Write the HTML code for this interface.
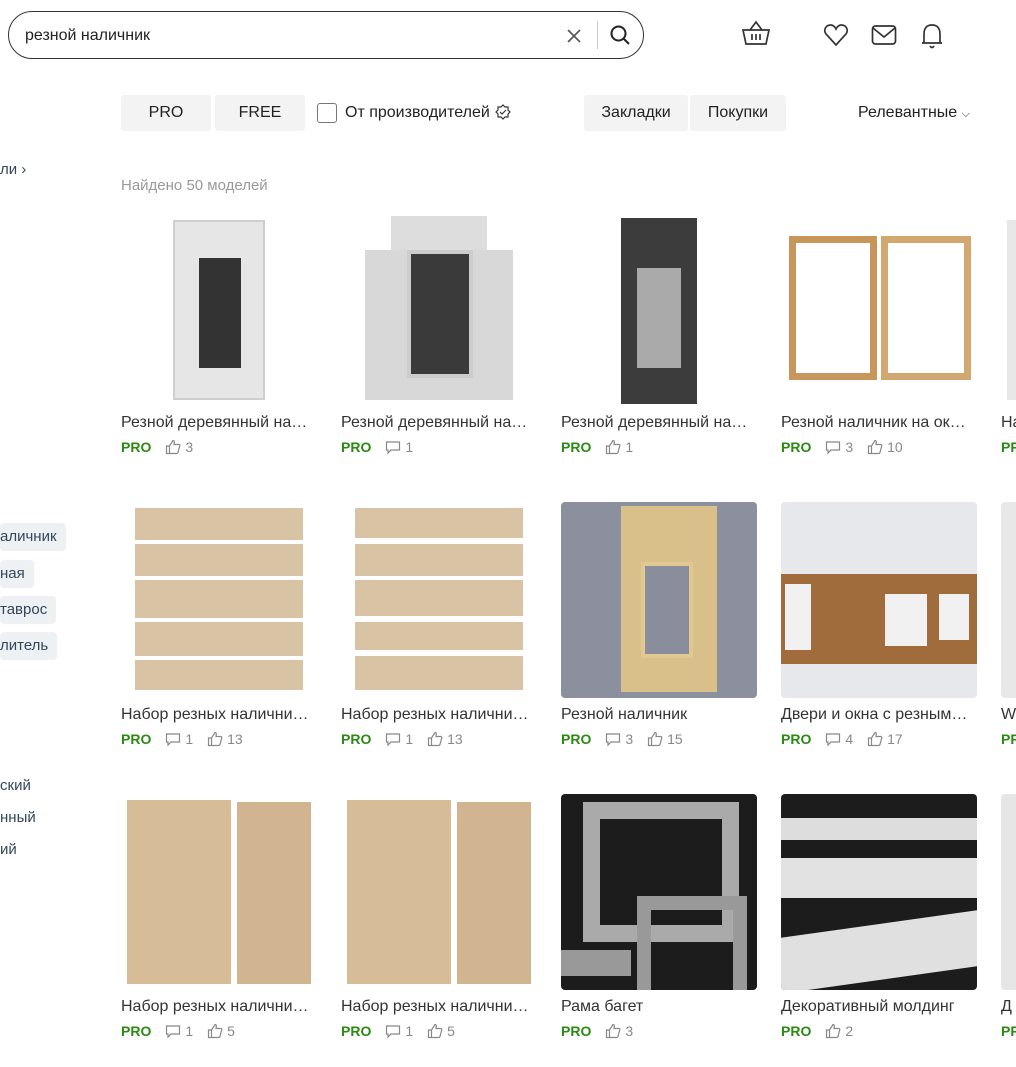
<!DOCTYPE html>
<html><head><meta charset="utf-8"><style>
*{margin:0;padding:0;box-sizing:border-box}
body{width:1016px;height:1067px;overflow:hidden;background:#fff;font-family:"Liberation Sans",sans-serif;color:#222;position:relative}
.a{position:absolute}
.search{left:8px;top:11px;width:636px;height:48px;border:1px solid #333;border-radius:24px}
.btn{background:#f3f3f3;border-radius:3px;font-size:16px;text-align:center;line-height:36px;color:#222}
.chip{background:#eef1f4;border-radius:4px;font-size:15px;color:#34465a;line-height:28px;padding:0 9px 0 0;left:0}
.side{font-size:15px;color:#34465a;left:0}
.img{width:196px;height:196px;border-radius:4px;overflow:hidden}
.t{font-size:16px;color:#333;white-space:nowrap;width:196px;overflow:hidden}
.m{font-size:14px;color:#888;display:flex;align-items:center;white-space:nowrap}
.m b{color:#2a8a12;font-weight:bold;margin-right:14px}
.m svg{margin-right:4px}
.m span{margin-right:14px}
.strip{position:absolute;background:#d9c3a5;left:14px;right:14px}
</style></head><body>
<div class="a search"></div>
<div class="a" style="left:25px;top:27px;font-size:16px">резной наличник</div>
<svg class="a" style="left:566px;top:28px" width="16" height="16"><path d="M2 2L14 14M14 2L2 14" stroke="#555" stroke-width="1.6"/></svg>
<div class="a" style="left:597px;top:21px;width:1px;height:28px;background:#ccc"></div>
<svg class="a" style="left:609px;top:24px" width="22" height="22"><circle cx="9.5" cy="9.5" r="7" fill="none" stroke="#222" stroke-width="2"/><path d="M14.5 14.5L20 20" stroke="#222" stroke-width="2"/></svg>
<svg class="a" style="left:741px;top:20px" width="30" height="26" fill="none" stroke="#333" stroke-width="1.7"><path d="M2 10H28L25 24H5Z M9 10L15 2L21 10 M11 14v6 M15 14v6 M19 14v6"/></svg>
<svg class="a" style="left:823px;top:23px" width="26" height="24" fill="none" stroke="#333" stroke-width="1.7"><path d="M13 22L3 11C0 7 3 2 7.5 2C10 2 12 4 13 6C14 4 16 2 18.5 2C23 2 26 7 23 11Z"/></svg>
<svg class="a" style="left:871px;top:24px" width="26" height="22" fill="none" stroke="#333" stroke-width="1.7"><rect x="1.5" y="2" width="23" height="18" rx="3"/><path d="M2 4L13 13L24 4"/></svg>
<svg class="a" style="left:920px;top:22px" width="24" height="28" fill="none" stroke="#333" stroke-width="1.7"><path d="M4 21V12C4 6 7 3 12 3C17 3 20 6 20 12V21H2H22 M10 24Q12 27 14 24"/></svg>

<div class="a btn" style="left:121px;top:95px;width:90px">PRO</div>
<div class="a btn" style="left:215px;top:95px;width:90px">FREE</div>
<div class="a" style="left:317px;top:103px;width:20px;height:20px;border:1px solid #777;border-radius:3px"></div>
<div class="a" style="left:345px;top:104px;font-size:16px">От производителей</div>
<svg class="a" style="left:495px;top:104px" width="16" height="16" fill="none" stroke="#333" stroke-width="1.2"><path d="M8 1L10 3L13 3L13 6L15 8L13 10L13 13L10 13L8 15L6 13L3 13L3 10L1 8L3 6L3 3L6 3Z M5 8L7 10L11 6"/></svg>
<div class="a btn" style="left:584px;top:95px;width:104px">Закладки</div>
<div class="a btn" style="left:690px;top:95px;width:96px">Покупки</div>
<div class="a" style="left:858px;top:104px;font-size:16px">Релевантные <span style="font-size:11px">⌵</span></div>

<div class="a side" style="top:161px">ли ›</div>
<div class="a" style="left:121px;top:177px;font-size:15px;color:#999">Найдено 50 моделей</div>

<div class="a chip" style="top:523px">аличник</div>
<div class="a chip" style="top:560px">ная</div>
<div class="a chip" style="top:596px">таврос</div>
<div class="a chip" style="top:632px">литель</div>
<div class="a side" style="top:777px">ский</div>
<div class="a side" style="top:809px">нный</div>
<div class="a side" style="top:841px">ий</div>

<!-- Row 1 -->
<div class="a img" style="left:121px;top:210px"><div class="a" style="left:52px;top:10px;width:92px;height:180px;background:#e6e6e6;border:2px solid #cfcfcf"></div><div class="a" style="left:78px;top:48px;width:42px;height:110px;background:#333"></div></div>
<div class="a img" style="left:341px;top:210px"><div class="a" style="left:24px;top:40px;width:148px;height:150px;background:#d8d8d8"></div><div class="a" style="left:66px;top:40px;width:66px;height:128px;background:#3a3a3a;border:4px solid #ccc"></div><div class="a" style="left:50px;top:6px;width:96px;height:34px;background:#ddd"></div></div>
<div class="a img" style="left:561px;top:210px"><div class="a" style="left:60px;top:8px;width:76px;height:186px;background:#3c3c3c"></div><div class="a" style="left:76px;top:58px;width:44px;height:100px;background:#aaa"></div></div>
<div class="a img" style="left:781px;top:210px"><div class="a" style="left:8px;top:26px;width:88px;height:144px;border:7px solid #c8955a"></div><div class="a" style="left:100px;top:26px;width:90px;height:144px;border:7px solid #d3a870"></div></div>
<div class="a img" style="left:1001px;top:210px"><div class="a" style="left:6px;top:10px;width:20px;height:180px;background:#e8e8e8"></div></div>
<div class="a t" style="left:121px;top:414px">Резной деревянный на…</div>
<div class="a t" style="left:341px;top:414px">Резной деревянный на…</div>
<div class="a t" style="left:561px;top:414px">Резной деревянный на…</div>
<div class="a t" style="left:781px;top:414px">Резной наличник на ок…</div>
<div class="a t" style="left:1001px;top:414px;width:15px">На</div>

<!-- Row 2 -->
<div class="a img" style="left:121px;top:502px"><div class="strip" style="top:6px;height:32px"></div><div class="strip" style="top:42px;height:32px"></div><div class="strip" style="top:78px;height:38px"></div><div class="strip" style="top:120px;height:34px"></div><div class="strip" style="top:158px;height:30px"></div></div>
<div class="a img" style="left:341px;top:502px"><div class="strip" style="top:6px;height:30px"></div><div class="strip" style="top:42px;height:32px"></div><div class="strip" style="top:78px;height:36px"></div><div class="strip" style="top:120px;height:28px"></div><div class="strip" style="top:154px;height:34px"></div></div>
<div class="a img" style="left:561px;top:502px;background:#8c909e"><div class="a" style="left:60px;top:4px;width:96px;height:186px;background:#d9bf8a"></div><div class="a" style="left:80px;top:60px;width:52px;height:96px;background:#8a8e9c;border:4px solid #e0c890"></div></div>
<div class="a img" style="left:781px;top:502px;background:#e6e8eb"><div class="a" style="left:0;top:72px;width:196px;height:90px;background:#a06c3c"></div><div class="a" style="left:4px;top:82px;width:26px;height:66px;background:#f1f1f1"></div><div class="a" style="left:104px;top:92px;width:42px;height:52px;background:#f1f1f1"></div><div class="a" style="left:158px;top:92px;width:30px;height:46px;background:#f1f1f1"></div></div>
<div class="a img" style="left:1001px;top:502px;background:#e8e8e8"></div>
<div class="a t" style="left:121px;top:706px">Набор резных налични…</div>
<div class="a t" style="left:341px;top:706px">Набор резных налични…</div>
<div class="a t" style="left:561px;top:706px">Резной наличник</div>
<div class="a t" style="left:781px;top:706px">Двери и окна с резным…</div>
<div class="a t" style="left:1001px;top:706px;width:15px">W</div>

<!-- Row 3 -->
<div class="a img" style="left:121px;top:794px"><div class="a" style="left:6px;top:6px;width:104px;height:184px;background:#d6bd98"></div><div class="a" style="left:116px;top:8px;width:74px;height:182px;background:#d0b590"></div></div>
<div class="a img" style="left:341px;top:794px"><div class="a" style="left:6px;top:6px;width:104px;height:184px;background:#d6bd98"></div><div class="a" style="left:116px;top:8px;width:74px;height:182px;background:#d0b590"></div></div>
<div class="a img" style="left:561px;top:794px;background:#1c1c1c"><div class="a" style="left:22px;top:8px;width:156px;height:140px;border:17px solid #aaa"></div><div class="a" style="left:76px;top:102px;width:110px;height:108px;border:14px solid #999"></div><div class="a" style="left:0;top:156px;width:70px;height:26px;background:#999"></div></div>
<div class="a img" style="left:781px;top:794px;background:#1c1c1c"><div class="a" style="left:0;top:24px;width:196px;height:22px;background:#ddd"></div><div class="a" style="left:0;top:64px;width:196px;height:40px;background:#e2e2e2"></div><div class="a" style="left:0;top:130px;width:196px;height:56px;background:#e0e0e0;transform:skewY(-8deg)"></div></div>
<div class="a img" style="left:1001px;top:794px;background:#e6e6e6"></div>
<div class="a t" style="left:121px;top:998px">Набор резных налични…</div>
<div class="a t" style="left:341px;top:998px">Набор резных налични…</div>
<div class="a t" style="left:561px;top:998px">Рама багет</div>
<div class="a t" style="left:781px;top:998px">Декоративный молдинг</div>
<div class="a t" style="left:1001px;top:998px;width:15px">Д</div>

<svg width="0" height="0" style="position:absolute"><defs>
<symbol id="c" viewBox="0 0 16 16"><path d="M1.5 3H14.5V11H6L3 14V11H1.5Z" fill="none" stroke="#888" stroke-width="1.2"/></symbol>
<symbol id="l" viewBox="0 0 16 16"><path d="M1.5 7H4.5V14.5H1.5Z M4.5 7L8 1.5C9.5 1.5 9.5 3 9 5.5H14C15 5.5 15 7 14.5 7.5L13 13.5C12.7 14.3 12 14.5 11 14.5H4.5" fill="none" stroke="#888" stroke-width="1.2"/></symbol>
</defs></svg>

<div class="a m" style="left:121px;top:439px"><b>PRO</b><svg width="16" height="16"><use href="#l"/></svg><span>3</span></div>
<div class="a m" style="left:341px;top:439px"><b>PRO</b><svg width="16" height="16"><use href="#c"/></svg><span>1</span></div>
<div class="a m" style="left:561px;top:439px"><b>PRO</b><svg width="16" height="16"><use href="#l"/></svg><span>1</span></div>
<div class="a m" style="left:781px;top:439px"><b>PRO</b><svg width="16" height="16"><use href="#c"/></svg><span>3</span><svg width="16" height="16"><use href="#l"/></svg><span>10</span></div>
<div class="a m" style="left:1001px;top:439px"><b>PR</b></div>

<div class="a m" style="left:121px;top:731px"><b>PRO</b><svg width="16" height="16"><use href="#c"/></svg><span>1</span><svg width="16" height="16"><use href="#l"/></svg><span>13</span></div>
<div class="a m" style="left:341px;top:731px"><b>PRO</b><svg width="16" height="16"><use href="#c"/></svg><span>1</span><svg width="16" height="16"><use href="#l"/></svg><span>13</span></div>
<div class="a m" style="left:561px;top:731px"><b>PRO</b><svg width="16" height="16"><use href="#c"/></svg><span>3</span><svg width="16" height="16"><use href="#l"/></svg><span>15</span></div>
<div class="a m" style="left:781px;top:731px"><b>PRO</b><svg width="16" height="16"><use href="#c"/></svg><span>4</span><svg width="16" height="16"><use href="#l"/></svg><span>17</span></div>
<div class="a m" style="left:1001px;top:731px"><b>PR</b></div>

<div class="a m" style="left:121px;top:1023px"><b>PRO</b><svg width="16" height="16"><use href="#c"/></svg><span>1</span><svg width="16" height="16"><use href="#l"/></svg><span>5</span></div>
<div class="a m" style="left:341px;top:1023px"><b>PRO</b><svg width="16" height="16"><use href="#c"/></svg><span>1</span><svg width="16" height="16"><use href="#l"/></svg><span>5</span></div>
<div class="a m" style="left:561px;top:1023px"><b>PRO</b><svg width="16" height="16"><use href="#l"/></svg><span>3</span></div>
<div class="a m" style="left:781px;top:1023px"><b>PRO</b><svg width="16" height="16"><use href="#l"/></svg><span>2</span></div>
<div class="a m" style="left:1001px;top:1023px"><b>PR</b></div>
</body></html>
